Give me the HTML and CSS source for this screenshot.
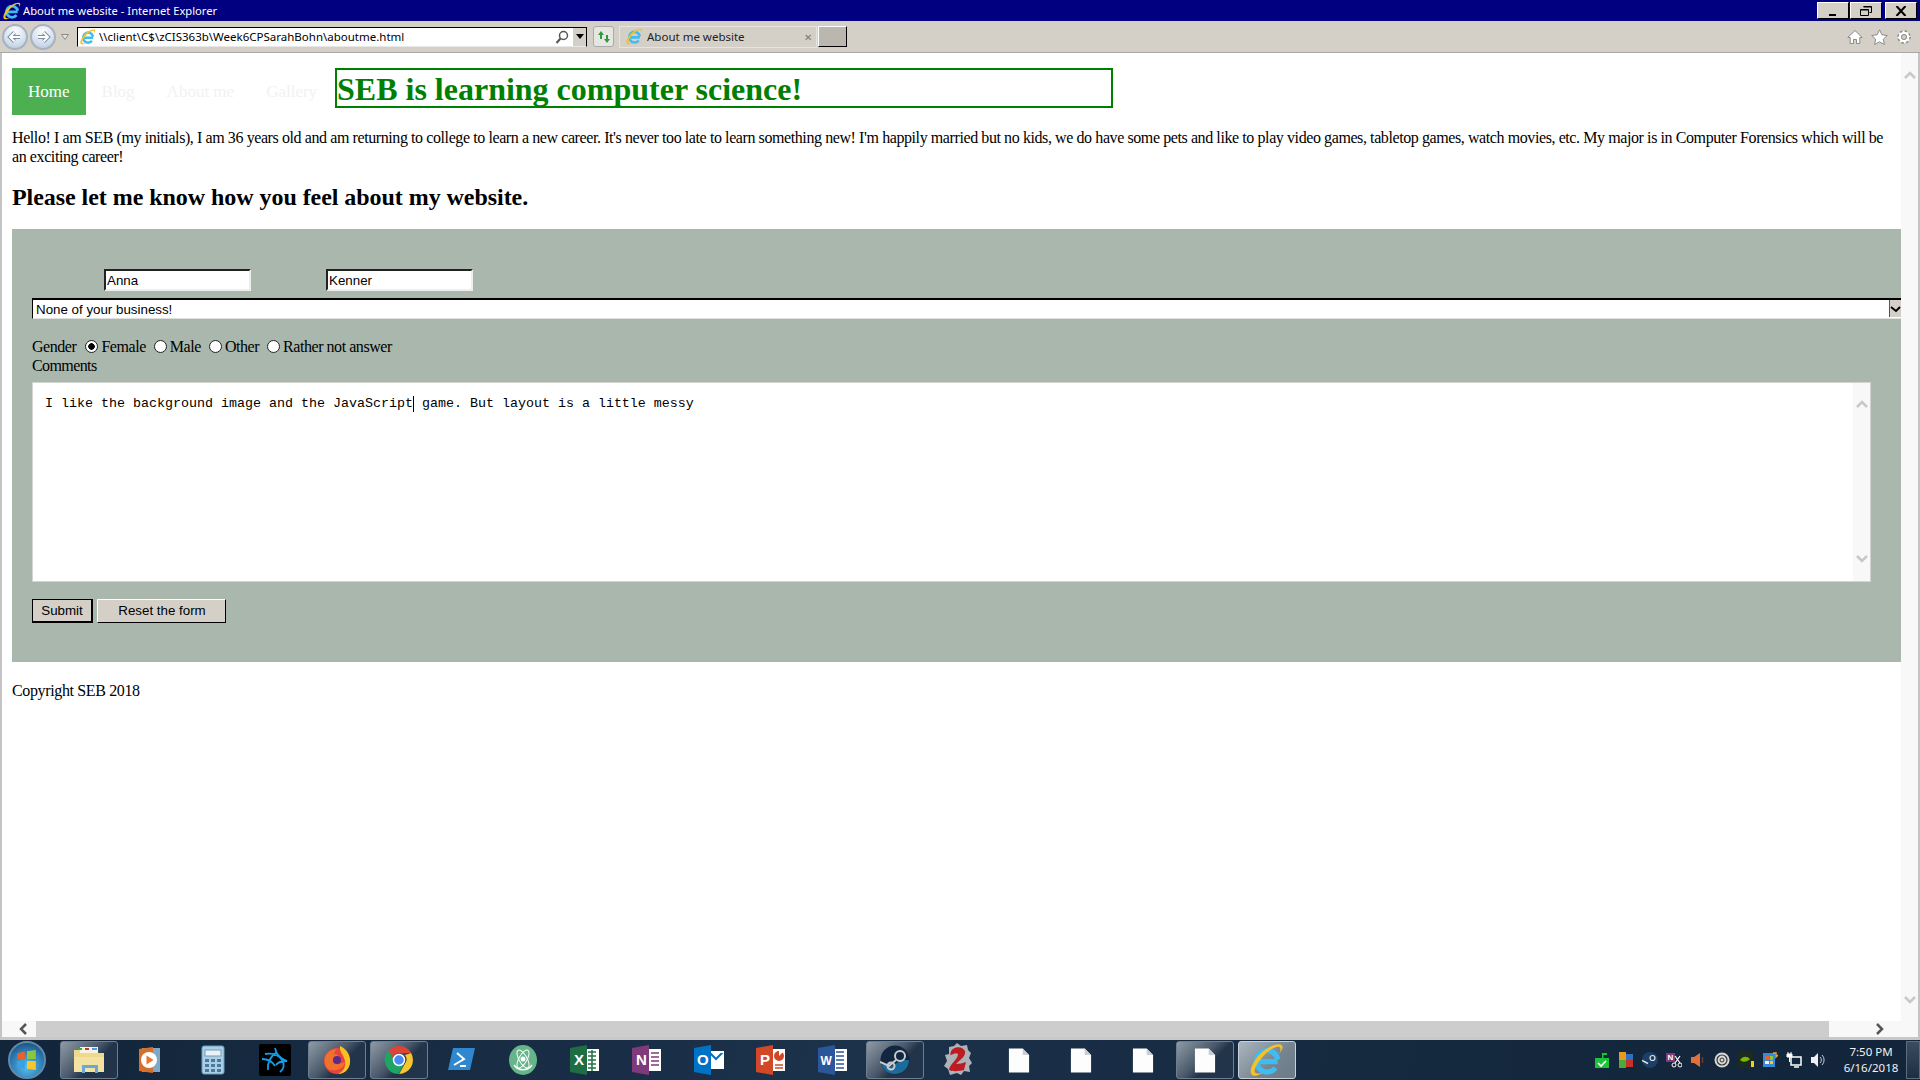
FILE: index.html
```html
<!DOCTYPE html>
<html lang="en">
<head>
    <meta charset="UTF-8">
    <title>About me website - Internet Explorer</title>
    <link rel="stylesheet" href="styles.css">
</head>
<body>
<svg class="defs" width="0" height="0">
    <defs>
        <symbol id="ie" viewBox="0 0 32 32">
            <path d="M8 17.500h18M26 15.500a10 10 0 1 0-2 8" fill="none" stroke="#3fbdf2" stroke-width="5"/>
            <path d="M30 2C25-1 14 5 7 13 1 21-1 28 2 30c3 2 7 0 10-2-3 1-6 1-7 0-2-2 1-8 6-14C17 7 25 2 28 4c1 1 1 4-1 7 2-3 5-7 3-9z" fill="#f2c12c"/>
        </symbol>
        <symbol id="doc" viewBox="0 0 24 28">
            <path d="M1 1h15l7 7v19H1z" fill="#fdfdfd"/>
            <path d="M16 1l7 7h-7z" fill="#c9ced4"/>
        </symbol>
    </defs>
</svg>
<div class="window">
    <div class="titlebar">
        <svg class="title-icon"><use href="#ie"/></svg>
        <span class="title-text">About me website - Internet Explorer</span>
        <div class="win-buttons">
            <div class="win-btn"><svg width="12" height="10" viewBox="0 0 12 10"><path d="M2 8h7v2H2z"/></svg></div>
            <div class="win-btn"><svg width="12" height="10" viewBox="0 0 12 10"><path d="M3.500.5h8v6h-2M.5 3.500h8v6h-8zM.5 4h8M3.500 1h8" fill="none" stroke="#000"/></svg></div>
            <div class="win-btn win-close"><svg width="12" height="10" viewBox="0 0 12 10"><path d="M1.500 0l9 10M10.500 0l-9 10" stroke="#000" stroke-width="2"/></svg></div>
        </div>
    </div>

    <div class="toolbar">
        <div class="nav-round">
            <svg width="18" height="18" viewBox="0 0 18 18"><path d="M14 9H5M8.500 4.500L4 9l4.500 4.500" fill="none" stroke="#7e8ea2" stroke-width="4"/><path d="M14 9H5M8.500 4.500L4 9l4.500 4.500" fill="none" stroke="#fff" stroke-width="2"/></svg>
        </div>
        <div class="nav-round">
            <svg width="18" height="18" viewBox="0 0 18 18"><path d="M4 9h9M9.500 4.500L14 9l-4.500 4.500" fill="none" stroke="#7e8ea2" stroke-width="4"/><path d="M4 9h9M9.500 4.500L14 9l-4.500 4.500" fill="none" stroke="#fff" stroke-width="2"/></svg>
        </div>
        <svg class="nav-drop" width="8" height="6" viewBox="0 0 8 6"><path d="M.5.500h7L4 5.500z" fill="#e8e6e0" stroke="#8a8a8a"/></svg>
        <div class="address">
            <svg class="addr-icon"><use href="#ie"/></svg>
            <span class="addr-text">\\client\C$\zCIS363b\Week6CPSarahBohn\aboutme.html</span>
            <svg class="addr-search" width="14" height="14" viewBox="0 0 14 14"><circle cx="8.500" cy="5.500" r="4" fill="none" stroke="#555" stroke-width="1.500"/><path d="M5.500 8.500L1.500 13" stroke="#555" stroke-width="2"/></svg>
            <div class="addr-drop"><svg width="8" height="5" viewBox="0 0 8 5"><path d="M0 0h8L4 5z"/></svg></div>
        </div>
        <div class="refresh">
            <svg width="16" height="16" viewBox="0 0 16 16"><path d="M2 6l3-4 3 4H6v4H4V6z" fill="#2e9a3a"/><path d="M14 10l-3 4-3-4h2V6h2v4z" fill="#2e9a3a"/></svg>
        </div>
        <div class="tab">
            <svg class="tab-icon"><use href="#ie"/></svg>
            <span class="tab-text">About me website</span>
            <span class="tab-close">✕</span>
        </div>
        <div class="new-tab"></div>
        <div class="tool-icons">
            <svg width="16" height="16" viewBox="0 0 16 16"><path d="M8 1.500L.8 8.500h2.400v6h3.300v-4h3v4h3.300v-6h2.400z" fill="#fff" stroke="#8a8a8a"/></svg>
            <svg width="17" height="16" viewBox="0 0 17 16"><path d="M8.500 .8l2.400 5 5.400.7-4 3.700 1.100 5.300-4.900-2.700-4.900 2.700 1.100-5.300-4-3.700 5.400-.7z" fill="#fff" stroke="#8a8a8a"/></svg>
            <svg width="16" height="16" viewBox="0 0 16 16"><circle cx="8" cy="8" r="4.500" fill="none" stroke="#fff" stroke-width="3"/><circle cx="8" cy="8" r="6" fill="none" stroke="#8a8a8a" stroke-width="1.500" stroke-dasharray="2.400 2.300"/><circle cx="8" cy="8" r="2.500" fill="none" stroke="#8a8a8a"/></svg>
        </div>
    </div>

    <div class="viewport">
        <main class="page">
            <div class="masthead">
                <ul class="site-nav">
                    <li class="active"><a href="#">Home</a></li>
                    <li><a href="#">Blog</a></li>
                    <li><a href="#">About me</a></li>
                    <li><a href="#">Gallery</a></li>
                </ul>
                <h1 class="site-title">SEB is learning computer science!</h1>
            </div>
            <p class="intro">Hello! I am SEB (my initials), I am 36 years old and am returning to college to learn a new career. It's never too late to learn something new! I'm happily married but no kids, we do have some pets and like to play video games, tabletop games, watch movies, etc. My major is in Computer Forensics which will be<br>an exciting career!</p>
            <h2 class="feedback-title">Please let me know how you feel about my website.</h2>

            <form class="feedback">
                <div class="name-row">
                    <input class="field" type="text" value="Anna">
                    <input class="field" type="text" value="Kenner">
                </div>
                <div class="select-wrap">
                    <select class="age-select">
                        <option>None of your business!</option>
                    </select>
                    <div class="select-arrow"><svg width="11" height="14" viewBox="0 0 11 14"><path d="M1 5l5 4 4-4" fill="none" stroke="#000" stroke-width="2"/></svg></div>
                </div>
                <div class="gender-row">
                    <span class="gender-label">Gender</span>
                    <label><input type="radio" name="gender" checked>Female</label>
                    <label><input type="radio" name="gender">Male</label>
                    <label><input type="radio" name="gender">Other</label>
                    <label><input type="radio" name="gender">Rather not answer</label>
                </div>
                <div class="comments-label">Comments</div>
                <div class="comments">
                    <div class="comments-text">I like the background image and the JavaScript<span class="caret"></span> game. But layout is a little messy</div>
                    <div class="comments-scroll">
                        <svg width="12" height="8" viewBox="0 0 12 8"><path d="M1 7l5-5 5 5" fill="none" stroke="#c8c8c8" stroke-width="2.500"/></svg>
                        <svg width="12" height="8" viewBox="0 0 12 8"><path d="M1 1l5 5 5-5" fill="none" stroke="#c8c8c8" stroke-width="2.500"/></svg>
                    </div>
                </div>
                <div class="form-buttons">
                    <button type="button" class="btn btn-submit">Submit</button>
                    <button type="reset" class="btn btn-reset">Reset the form</button>
                </div>
            </form>
            <footer class="copyright">Copyright SEB 2018</footer>
        </main>
        <div class="vscroll">
            <svg width="12" height="8" viewBox="0 0 12 8"><path d="M1 7l5-5 5 5" fill="none" stroke="#c8c8c8" stroke-width="2.500"/></svg>
            <svg width="12" height="8" viewBox="0 0 12 8"><path d="M1 1l5 5 5-5" fill="none" stroke="#c8c8c8" stroke-width="2.500"/></svg>
        </div>
    </div>

    <div class="hscroll">
        <div class="hscroll-end hscroll-left"><svg width="9" height="12" viewBox="0 0 9 12"><path d="M7 1L2 6l5 5" fill="none" stroke="#555" stroke-width="2.500"/></svg></div>
        <div class="hscroll-thumb"></div>
        <div class="hscroll-end hscroll-right"><svg width="9" height="12" viewBox="0 0 9 12"><path d="M2 1l5 5-5 5" fill="none" stroke="#555" stroke-width="2.500"/></svg></div>
    </div>

    <div class="taskbar">
        <div class="start-orb">
            <svg width="22" height="22" viewBox="0 0 20 20">
                <path d="M1 4l7-2v7H1z" fill="#e8622a"/>
                <path d="M10 2l8-1v8h-8z" fill="#8cc63f"/>
                <path d="M1 11h7v7l-7-1z" fill="#3aa0e8"/>
                <path d="M10 11h8v8l-8-1z" fill="#f7c52e"/>
            </svg>
        </div>
        <div class="task-list">
            <div class="task task-open">
                <svg width="34" height="30" viewBox="0 0 34 30"><path d="M2 5h12l2 3h16v19H2z" fill="#eed98c"/><path d="M8 2h18v6H8z" fill="#f7f3e0"/><path d="M13 3h4v2h-4z" fill="#c8382c"/><path d="M6 3h4v2H6z" fill="#3aa84a"/><path d="M20 3h5v2h-5z" fill="#4aa0e0"/><path d="M2 12h30v15H2z" fill="#f3e3a2"/><path d="M10 20h16v8h-3v-5H13v5h-3z" fill="#6aa8d8"/></svg>
            </div>
            <div class="task">
                <svg width="26" height="30" viewBox="0 0 26 30"><path d="M4 3l18 0v24H4z" fill="#7fa8c8"/><path d="M1 4l14-2v26L1 26z" fill="#d76f2c"/><circle cx="11" cy="15" r="8" fill="#fff"/><path d="M8.500 10.500l7 4.500-7 4.500z" fill="#e8762c"/></svg>
            </div>
            <div class="task">
                <svg width="24" height="30" viewBox="0 0 24 30"><rect x="1" y="1" width="22" height="28" rx="2" fill="#a9cfe6" stroke="#6d9dbd"/><rect x="4" y="5" width="16" height="6" fill="#e8f2f8" stroke="#7a9ab0"/><path d="M4 14h4v3H4zm6 0h4v3h-4zm6 0h4v3h-4zM4 19h4v3H4zm6 0h4v3h-4zm6 0h4v3h-4zM4 24h4v3H4zm6 0h4v3h-4zm6 0h4v3h-4z" fill="#4d7a9c"/></svg>
            </div>
            <div class="task">
                <svg width="32" height="32" viewBox="0 0 32 32"><rect width="32" height="32" rx="2" fill="#000"/><path d="M16 4c1 6 6 11 12 13-5 0-9 1-11 4M6 10c6-1 13 0 17 6 3 4 2 9-2 12M9 26c-1-6 2-14 9-18M3 15c5 0 10 2 13 7" fill="none" stroke="#149ce6" stroke-width="1.800"/></svg>
            </div>
            <div class="task task-open">
                <svg width="30" height="30" viewBox="0 0 30 30"><circle cx="15" cy="16" r="13" fill="#e8443a"/><path d="M18 1c7 3 11 10 10 17-1 7-6 11-12 11 6-3 8-8 7-13-1-6-6-9-5-15z" fill="#fbbf24"/><path d="M3 12c2-5 7-8 12-8-2 2-3 4-3 5 3 0 5 2 5 4-3 1-6 1-6 3s3 4 6 3c3-1 5-2 6-1-2 5-7 8-12 7C5 26 1 19 3 12z" fill="#f0712b"/><circle cx="15" cy="15" r="4" fill="#5a2a8c"/></svg>
            </div>
            <div class="task task-open">
                <svg width="30" height="30" viewBox="0 0 30 30"><path d="M15 1a14 14 0 0 1 12.100 7H15a7 7 0 0 0-6.500 4.500L4.500 5.500A14 14 0 0 1 15 1z" fill="#dc4437"/><path d="M27.100 8A14 14 0 0 1 15 29l6-10.500A7 7 0 0 0 21 10z" fill="#f7c52e"/><path d="M4.500 5.500l6.500 11a7 7 0 0 0 9.500 2L14.500 29A14 14 0 0 1 4.500 5.500z" fill="#1fa463"/><circle cx="15" cy="15" r="5.500" fill="#4a8af4" stroke="#fff" stroke-width="1.500"/></svg>
            </div>
            <div class="task">
                <svg width="30" height="26" viewBox="0 0 30 26"><path d="M7 1h22l-5 22H2z" fill="#2f88cf"/><path d="M11 6l7 6-10 6" fill="none" stroke="#fff" stroke-width="2"/><path d="M14 19h6" stroke="#fff" stroke-width="2"/></svg>
            </div>
            <div class="task">
                <svg width="30" height="32" viewBox="0 0 30 32"><ellipse cx="15" cy="16" rx="14" ry="15" fill="#66b58a"/><circle cx="15" cy="15" r="2.500" fill="#fff"/><ellipse cx="15" cy="15" rx="10" ry="4" fill="none" stroke="#fff" transform="rotate(60 15 15)"/><ellipse cx="15" cy="15" rx="10" ry="4" fill="none" stroke="#fff" transform="rotate(-60 15 15)"/><path d="M6 21a11 11 0 0 0 18 0" fill="none" stroke="#fff" stroke-width="1.500"/></svg>
            </div>
            <div class="task">
                <svg width="30" height="30" viewBox="0 0 30 30"><path d="M15 4h14v22H15z" fill="#fff"/><path d="M18 7h8M18 11h8M18 15h8M18 19h8M18 23h8M22 5v21" stroke="#217346" stroke-width="1.500"/><path d="M0 3l17-3v30L0 27z" fill="#1f6e43"/><text class="office-letter" x="4" y="20">X</text></svg>
            </div>
            <div class="task">
                <svg width="30" height="30" viewBox="0 0 30 30"><path d="M15 4h14v22H15z" fill="#fff"/><path d="M19 8h8M19 12h8M19 16h8M19 20h8" stroke="#80397b" stroke-width="1.500"/><path d="M0 3l17-3v30L0 27z" fill="#80397b"/><text class="office-letter" x="4" y="20">N</text></svg>
            </div>
            <div class="task">
                <svg width="30" height="30" viewBox="0 0 30 30"><path d="M14 6h16v18H14z" fill="#fff"/><path d="M15 7l7 7 7-7" fill="none" stroke="#0072c6" stroke-width="2"/><path d="M14 6h16v2H14z" fill="#fff"/><path d="M0 3l17-3v30L0 27z" fill="#0072c6"/><text class="office-letter" x="3" y="20">O</text></svg>
            </div>
            <div class="task">
                <svg width="30" height="30" viewBox="0 0 30 30"><path d="M15 4h14v22H15z" fill="#fff"/><path d="M19 20h8M19 23h8" stroke="#d24726" stroke-width="1.500"/><circle cx="23" cy="11" r="5" fill="#d24726"/><path d="M23 11V6h5" fill="#fff"/><path d="M0 3l17-3v30L0 27z" fill="#d24726"/><text class="office-letter" x="4" y="20">P</text></svg>
            </div>
            <div class="task">
                <svg width="30" height="30" viewBox="0 0 30 30"><path d="M15 4h14v22H15z" fill="#fff"/><path d="M18 7h8M18 11h8M18 15h8M18 19h8M18 23h8" stroke="#2b579a" stroke-width="1.500"/><path d="M0 3l17-3v30L0 27z" fill="#2b579a"/><text class="office-letter office-w" x="2.500" y="20">W</text></svg>
            </div>
            <div class="task task-open">
                <svg width="30" height="30" viewBox="0 0 30 30"><circle cx="15" cy="15" r="14.500" fill="#12263f"/><path d="M15 29A14 14 0 0 0 29 15H22L10 22l-9-3A14 14 0 0 0 15 29z" fill="#1b6c9a"/><circle cx="20" cy="11" r="5" fill="none" stroke="#c8ccd0" stroke-width="2"/><circle cx="11" cy="21" r="3.500" fill="none" stroke="#c8ccd0" stroke-width="2"/><path d="M0 17l9 4 7-6" fill="none" stroke="#c8ccd0" stroke-width="2"/></svg>
            </div>
            <div class="task">
                <svg width="30" height="34" viewBox="0 0 30 34"><path d="M7 4l5-1 3-3 4 3 6-1 1 5 3 3-2 5 3 5-3 3 1 6-6-1-3 4-4-2-7 2-2-6-4-3 3-5-2-6 4-1z" fill="#eceaea" opacity=".7"/><path d="M11 6c4-3 10-2 12 2 1 5-4 8-8 12l-1 1c3 0 7-1 10-2l-2 8c-4 1-11 2-15 0 1-7 9-10 9-16-2-2-5 0-7 1-1 1-1-4 2-6z" fill="#bb1d22"/></svg>
            </div>
            <div class="task"><svg class="doc-icon"><use href="#doc"/></svg></div>
            <div class="task"><svg class="doc-icon"><use href="#doc"/></svg></div>
            <div class="task"><svg class="doc-icon"><use href="#doc"/></svg></div>
            <div class="task task-open"><svg class="doc-icon"><use href="#doc"/></svg></div>
            <div class="task task-open task-current"><svg class="task-ie"><use href="#ie"/></svg></div>
        </div>
        <div class="tray">
            <svg width="16" height="16" viewBox="0 0 16 16"><path d="M1 6h14v10H1z" fill="#1fc23a"/><path d="M8 6V1h5v2H9.500v3z" fill="#1fc23a"/><path d="M4 11l3 3 5-5" fill="none" stroke="#fff" stroke-width="1.600"/></svg>
            <svg width="16" height="16" viewBox="0 0 16 16"><path d="M1 0h7v8H1z" fill="#e89a1c"/><path d="M8 2h7v6H8z" fill="#2f6fc4"/><path d="M1 8h7v8H1z" fill="#4fa83a"/><path d="M8 8h7v7H8z" fill="#c8322c"/></svg>
            <svg width="16" height="16" viewBox="0 0 16 16"><circle cx="8" cy="8" r="8" fill="#1b3f66"/><circle cx="10.500" cy="6" r="2.500" fill="none" stroke="#e0e4e8" stroke-width="1.200"/><path d="M0 8.500l6 3" stroke="#e0e4e8" stroke-width="1.500"/></svg>
            <svg width="16" height="16" viewBox="0 0 16 16"><path d="M0 1h9v9H0z" fill="#80397b"/><text class="tray-letter" x="1.500" y="8">N</text><path d="M9 4l5 7M14 4L9 11" stroke="#fff" stroke-width="1.200"/><circle cx="8" cy="13" r="2" fill="none" stroke="#fff"/><circle cx="14" cy="13" r="2" fill="none" stroke="#fff"/></svg>
            <svg width="16" height="16" viewBox="0 0 16 16"><path d="M1 5h3l6-4v14l-6-4H1z" fill="#e0703c"/><path d="M12.500 5v6" stroke="#6a3a30" stroke-width="1.500"/></svg>
            <svg width="16" height="16" viewBox="0 0 16 16"><circle cx="8" cy="8" r="7.500" fill="#d8d8d8"/><circle cx="8" cy="8" r="5" fill="none" stroke="#333" stroke-width="1.200"/><circle cx="8" cy="8" r="2" fill="none" stroke="#333"/></svg>
            <svg width="16" height="16" viewBox="0 0 16 16"><rect width="15" height="16" fill="#1c2a20"/><path d="M2 8c3-4 7-4 10-1-3 3-7 4-10 1z" fill="#76b900"/><path d="M13 9h3v6h-3z" fill="#f0d010"/></svg>
            <svg width="16" height="16" viewBox="0 0 16 16"><rect x="1" y="1" width="12" height="14" fill="#3a88d8"/><path d="M3 4h4v4H3z" fill="#e8622a"/><path d="M8 4h3v4H8z" fill="#8cc63f"/><path d="M3 9h4v3H3z" fill="#f7f3e0"/><path d="M8 9h3v3H8z" fill="#f7c52e"/><path d="M11 1h3v4l2-2" fill="none" stroke="#f0a030" stroke-width="1.500"/></svg>
            <svg width="16" height="16" viewBox="0 0 16 16"><path d="M5 5h10v8H5zM8 15h5" fill="none" stroke="#fff" stroke-width="1.500"/><path d="M2 0v2M5 0v2M1 2h5v3H1zM3.500 5v5" stroke="#fff" fill="#fff"/></svg>
            <svg width="16" height="16" viewBox="0 0 16 16"><path d="M1 5h3l4-4v14l-4-4H1z" fill="#f0f0f0"/><path d="M10 5a4 4 0 0 1 0 6M12 3a7 7 0 0 1 0 10" fill="none" stroke="#c8ccd0"/></svg>
        </div>
        <div class="clock">
            <span>7:50 PM</span>
            <span>6/16/2018</span>
        </div>
        <div class="show-desktop"></div>
    </div>
</div>
</body>
</html>
```

FILE: styles.css
```css
html, body {
    margin: 0;
    height: 100%;
    overflow: hidden;
}
body {
    font-family: "Liberation Serif", serif;
    font-size: 16px;
    color: #000;
    background: #fff;
}
.defs {
    display: block;
    height: 0;
}
.window {
    display: flex;
    flex-direction: column;
    height: 1080px;
}

/* title bar */
.titlebar {
    display: flex;
    align-items: center;
    height: 21px;
    flex: none;
    background: #000080;
    color: #fff;
    font-family: "Noto Sans", sans-serif;
    font-size: 11.200px;
    padding-left: 3px;
}
.title-icon {
    width: 18px;
    height: 18px;
}
.title-text {
    margin-left: 2px;
}
.win-buttons {
    display: flex;
    margin-left: auto;
    margin-right: 3px;
    gap: 1px;
}
.win-btn {
    display: flex;
    align-items: center;
    justify-content: center;
    width: 30px;
    height: 15px;
    background: #d4d0c8;
    border: 1px solid;
    border-color: #fff #000 #000 #fff;
}
.win-close {
    margin-left: 2px;
}

/* browser toolbar */
.toolbar {
    display: flex;
    align-items: center;
    height: 31px;
    flex: none;
    background: #d4d0c8;
    border-bottom: 1px solid #a8a8a8;
    padding-left: 2px;
}
.nav-round {
    display: flex;
    align-items: center;
    justify-content: center;
    width: 26px;
    height: 26px;
    margin-right: 2px;
    border-radius: 50%;
    border: 2px solid #a8b2be;
    box-sizing: border-box;
    background: radial-gradient(circle at 50% 25%, #fbfdff, #d3e0ee 60%, #b2c4d8);
}
.nav-drop {
    margin: 0 8px 0 3px;
}
.address {
    display: flex;
    align-items: center;
    width: 510px;
    height: 20px;
    box-sizing: border-box;
    background: #fff;
    border: 1px solid;
    border-color: #000 #000 #e8e8e8 #000;
    font-family: "Noto Sans", sans-serif;
    font-size: 11.500px;
}
.addr-icon {
    width: 16px;
    height: 16px;
    margin: 0 3px 0 2px;
}
.addr-search {
    margin-left: auto;
    margin-right: 3px;
}
.addr-drop {
    display: flex;
    align-items: center;
    justify-content: center;
    width: 13px;
    height: 18px;
    background: #d4d0c8;
    border-left: 1px solid #fff;
}
.refresh {
    display: flex;
    align-items: center;
    justify-content: center;
    width: 21px;
    height: 21px;
    margin-left: 6px;
    background: #e6e6e2;
    border: 1px solid #aaa;
    border-radius: 3px;
    box-sizing: border-box;
}
.tab {
    display: flex;
    align-items: center;
    width: 198px;
    height: 22px;
    box-sizing: border-box;
    margin-left: 5px;
    padding: 0 4px 0 6px;
    border: 1px solid #e6e4de;
    font-family: "Noto Sans", sans-serif;
    font-size: 11.500px;
    color: #222;
}
.tab-icon {
    width: 17px;
    height: 17px;
    margin-right: 4px;
}
.tab-close {
    margin-left: auto;
    color: #777;
    font-size: 10px;
}
.new-tab {
    width: 29px;
    height: 21px;
    box-sizing: border-box;
    margin-left: 1px;
    background: #bcb7ae;
    border: 1px solid;
    border-color: #fff #000 #000 #fff;
}
.tool-icons {
    display: flex;
    gap: 8px;
    margin-left: auto;
    margin-right: 8px;
}

/* page area */
.viewport {
    display: flex;
    flex: 1;
    min-height: 0;
}
.page {
    flex: 1;
    min-width: 0;
    padding: 15px 0 0 10px;
    border-left: 2px solid #c4c4c4;
    overflow: hidden;
}
.masthead {
    display: flex;
    align-items: flex-start;
}
.site-nav {
    display: flex;
    list-style: none;
    margin: 0;
    padding: 0;
    width: 323px;
    font-size: 17px;
}
.site-nav a {
    display: block;
    padding: 14px 16px;
    line-height: 19px;
    color: #f2f2f2;
    text-decoration: none;
}
.site-nav .active a {
    background: #4caf50;
    color: #fff;
}
.site-title {
    width: 774px;
    height: 36px;
    margin: 0;
    border: 2px solid #008000;
    font-size: 32px;
    line-height: 38px;
    color: #008000;
}
.intro {
    margin: 13px 0 0;
    line-height: 19px;
    letter-spacing: -0.41px;
}
.feedback-title {
    margin: 17px 0 18px;
    font-size: 24px;
    line-height: 28px;
    letter-spacing: -0.05px;
}
.feedback {
    display: block;
    height: 393px;
    padding: 40px 0 0 20px;
    background: #aab7ac;
    overflow: hidden;
}
.name-row {
    display: flex;
    gap: 75px;
    padding-left: 72px;
}
.field {
    width: 147px;
    height: 22px;
    box-sizing: border-box;
    padding: 0 1px;
    background: #fff;
    border: 2px solid;
    border-color: #222 #eee #eee #222;
    font-family: "Liberation Sans", sans-serif;
    font-size: 13.330px;
}
.select-wrap {
    position: relative;
    margin-top: 7px;
    height: 21px;
}
.age-select {
    display: block;
    width: 100%;
    height: 21px;
    box-sizing: border-box;
    padding: 0 0 0 3px;
    appearance: none;
    border: 0;
    border-top: 2px solid #000;
    border-left: 1px solid #000;
    border-bottom: 1px solid #dde1dd;
    border-radius: 0;
    background: #fff;
    font-family: "Liberation Sans", sans-serif;
    font-size: 13.330px;
}
.select-arrow {
    position: absolute;
    top: 2px;
    right: 0;
    width: 11px;
    height: 17px;
    display: flex;
    align-items: center;
    background: #d4d0c8;
    border-left: 1px solid #555;
    overflow: hidden;
}
.gender-row {
    display: flex;
    align-items: center;
    height: 19px;
    margin-top: 18px;
    line-height: 19px;
    letter-spacing: -0.45px;
}
.gender-row label {
    display: flex;
    align-items: center;
    margin-right: 8px;
}
.gender-label {
    margin-right: 9px;
}
.gender-row input {
    appearance: none;
    width: 13px;
    height: 13px;
    margin: 0 3px 0 0;
    border: 1px solid #222;
    border-radius: 50%;
    background: #fff;
}
.gender-row input:checked {
    background: radial-gradient(circle, #000 0 3px, #fff 3.500px);
}
.comments-label {
    line-height: 19px;
    letter-spacing: -0.6px;
}
.comments {
    display: flex;
    width: 1839px;
    height: 200px;
    box-sizing: border-box;
    margin-top: 7px;
    background: #fff;
    border: 1px solid #d2d4d2;
    font-family: "Liberation Mono", monospace;
    font-size: 13.330px;
}
.comments-text {
    flex: 1;
    padding: 13px 12px;
    line-height: 16px;
    white-space: pre;
}
.caret {
    display: inline-block;
    width: 0;
    height: 16px;
    vertical-align: top;
    border-left: 1px solid #000;
}
.comments-scroll {
    display: flex;
    flex-direction: column;
    justify-content: space-between;
    align-items: center;
    width: 17px;
    padding: 17px 0 18px;
    background: #f8f8f8;
}
.form-buttons {
    display: flex;
    gap: 4px;
    margin-top: 17px;
}
.btn {
    height: 24px;
    box-sizing: border-box;
    padding: 0;
    background: #d4d0c8;
    border: 1px solid;
    border-color: #fff #000 #000 #fff;
    font-family: "Liberation Sans", sans-serif;
    font-size: 13.330px;
    color: #000;
}
.btn-submit {
    width: 61px;
    outline: 1px solid #000;
    outline-offset: -1px;
    border-width: 1px 2px 2px 1px;
}
.btn-reset {
    width: 129px;
    padding: 0 0 2px 1px;
}
.copyright {
    margin-top: 19px;
    line-height: 19px;
    letter-spacing: -0.36px;
}
.vscroll {
    display: flex;
    flex-direction: column;
    justify-content: space-between;
    align-items: center;
    width: 19px;
    padding: 18px 0 17px;
    box-sizing: border-box;
    background: #f8f8f8;
    border-right: 2px solid #c4c4c4;
}

/* bottom scroll bar */
.hscroll {
    display: flex;
    align-items: stretch;
    height: 19px;
    flex: none;
    box-sizing: border-box;
    background: #f8f8f8;
    border-bottom: 3px solid #c8c8c8;
    border-left: 2px solid #c4c4c4;
    border-right: 2px solid #c4c4c4;
}
.hscroll-end {
    display: flex;
    align-items: center;
    justify-content: center;
    width: 34px;
}
.hscroll-left {
    padding-left: 8px;
    box-sizing: border-box;
}
.hscroll-thumb {
    width: 1793px;
    background: #cdcdcd;
}
.hscroll-right {
    margin-left: 33px;
}

/* task bar */
.taskbar {
    display: flex;
    align-items: center;
    height: 40px;
    flex: none;
    background: linear-gradient(100deg, #12253a, #1c324b 45%, #15293f 70%, #12253a);
}
.start-orb {
    display: flex;
    align-items: center;
    justify-content: center;
    width: 38px;
    height: 38px;
    margin: 0 14px 0 8px;
    border-radius: 50%;
    background: radial-gradient(circle at 50% 70%, #56c0ee, #2a74ac 60%, #123a5c);
    border: 2px solid #5f8aac;
    box-sizing: border-box;
}
.task-list {
    display: flex;
    gap: 4px;
}
.task {
    display: flex;
    align-items: center;
    justify-content: center;
    width: 58px;
    height: 38px;
    box-sizing: border-box;
}
.task-open {
    border: 1px solid #6e7e8e;
    border-radius: 3px;
    background: linear-gradient(135deg, #8f9ba6 0, #48586a 45%, #223449 60%, #223449);
}
.task-current {
    background: linear-gradient(135deg, #aab6c0, #75848f 60%, #6a7a88);
    border-color: #c8d0d8;
}
.doc-icon {
    width: 22px;
    height: 27px;
}
.task-ie {
    width: 34px;
    height: 34px;
}
.office-letter {
    font-family: "Liberation Sans", sans-serif;
    font-size: 15px;
    font-weight: 700;
    fill: #fff;
}
.office-w {
    font-size: 12px;
}
.tray-letter {
    font-family: "Liberation Sans", sans-serif;
    font-size: 8px;
    font-weight: 700;
    fill: #fff;
}
.tray {
    display: flex;
    gap: 8px;
    margin-left: auto;
    margin-right: 14px;
}
.clock {
    display: flex;
    flex-direction: column;
    align-items: center;
    width: 62px;
    margin-right: 4px;
    font-family: "Noto Sans", sans-serif;
    font-size: 11.500px;
    line-height: 16px;
    color: #f2f2f2;
}
.show-desktop {
    width: 12px;
    height: 36px;
    border: 1px solid #5c6c7c;
    background: linear-gradient(#3a4c60, #1c2e42);
}
```
